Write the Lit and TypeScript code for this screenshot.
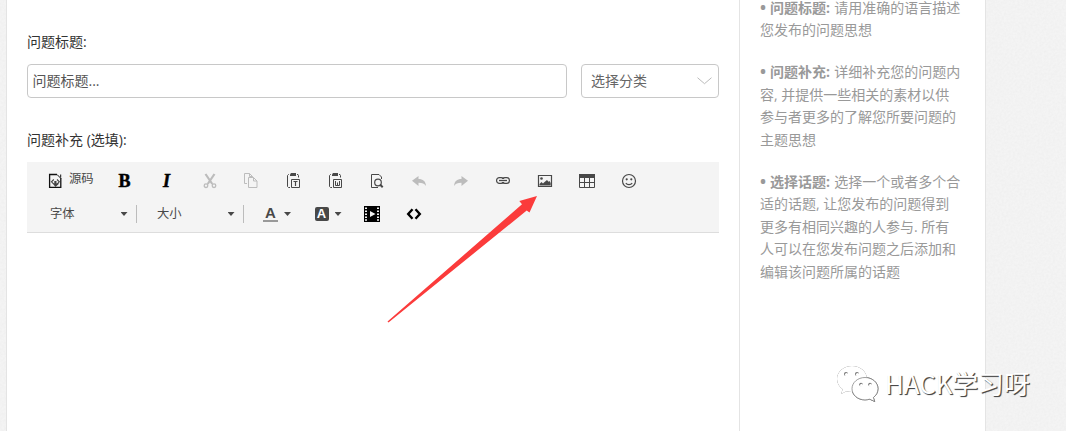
import { LitElement, html, css, svg } from "lit";
import { customElement, property } from "lit/decorators.js";

const glyphs: Record<string, unknown> = {
  source: svg`<path d="M9 1.500H1.600v12.800h11.200V5" fill="none" stroke="#111" stroke-width="1.300"/><path d="M9 1.500l3.800 3.800M12.700 1.500v3" fill="none" stroke="#111"/><path d="M5.800 6.500L3.500 8.800l2.300 2.300M9 6.500l2.300 2.300L9 11.100" fill="none" stroke="#444" stroke-width="1.100"/><path d="M6.300 8h2.200v2.500h2.800L7.400 14 4.800 10.500h1.500z" fill="#444"/>`,
  cut: svg`<g fill="none" stroke="#bcbcbc"><path d="M4.500 1l6.800 10M13.500 1L6.700 11" stroke-width="2.200"/><circle cx="5" cy="12.700" r="1.800" stroke-width="1.300"/><circle cx="13" cy="12.700" r="1.800" stroke-width="1.300"/></g>`,
  copy: svg`<g fill="none" stroke="#bcbcbc"><path d="M4 10.500H1.500v-10h5l3 3v1M6.500 .5v3h3"/><path d="M5.500 4.500h5l3.500 3.500v6.500H5.500z"/><path d="M10.500 4.500V8H14"/></g>`,
  pasteText: svg`<path d="M6 0h5v3H5V1.500z" fill="#484848"/><g fill="none" stroke="#484848"><path d="M4 1.500h-.5l-1 1v11l1 1H5M12 1.500h1l.5 1v2"/><path d="M6.500 6.500h8v8h-8z"/><path d="M8.500 8.500h4M10.500 8.500v4.500" stroke-width="1.200"/></g>`,
  pasteWord: svg`<path d="M6 0h5v3H5V1.500z" fill="#484848"/><g fill="none" stroke="#484848"><path d="M4 1.500h-.5l-1 1v11l1 1H5M12 1.500h1l.5 1v2"/><path d="M6.500 6.500h8v8h-8z"/><path d="M8.500 8v4.500h4V8M10.500 9.500v3"/></g>`,
  preview: svg`<g fill="none" stroke="#484848"><path d="M9 14.500H2.500v-13H10l2.500 2.500v2"/><circle cx="9" cy="9.500" r="3.300" stroke-width="1.200"/><path d="M11 11.500l2.700 2.700" stroke-width="2"/></g>`,
  undo: svg`<path d="M1 7.800L7.500 3v3c4.500 0 7 2 7.500 7C13.500 10.500 11.500 9.800 7.500 9.800V13z" fill="#bcbcbc"/>`,
  redo: svg`<path d="M15 7.800L8.500 3v3C4 6 1.500 8 1 13c1.500-2.500 3.500-3.200 7.500-3.200V13z" fill="#bcbcbc"/>`,
  link: svg`<g fill="none" stroke="#484848" stroke-width="1.200"><rect x="1.600" y="4.600" width="7.300" height="5.800" rx="2.700"/><rect x="7.100" y="4.600" width="7.300" height="5.800" rx="2.700"/></g><path d="M4 7.500h8" stroke="#f4f4f4" stroke-width="3"/><path d="M4 7.500h8" stroke="#484848" stroke-width="1.300"/>`,
  image: svg`<path d="M1.500 2.500h13v11h-13z" fill="none" stroke="#484848" stroke-width="1.200"/><path d="M2.500 12.500v-1.500l2-2 1.500 1.500 1-1L10 7l1.500 1.700L12.500 8 13.700 10v2.500z" fill="#484848"/><circle cx="4.500" cy="5.500" r="1.300" fill="#484848"/>`,
  table: svg`<path d="M0 1h16v4H0z" fill="#484848"/><path d="M.5 4.500v10h15v-10M.5 9.500h15M5.500 5v10M10.500 5v10" fill="none" stroke="#484848"/>`,
  smiley: svg`<circle cx="8" cy="8" r="6.500" fill="none" stroke="#484848" stroke-width="1.200"/><circle cx="5.700" cy="6.300" r="1.100" fill="#484848"/><circle cx="10.300" cy="6.300" r="1.100" fill="#484848"/><path d="M4.800 10.200c1.500 2 4.900 2 6.400 0" fill="none" stroke="#484848" stroke-width="1.200"/>`,
  video: svg`<path d="M0 0h16v16H0z"/><g fill="#f4f4f4"><path d="M1 1.500h2V3H1zM1 4.500h2V6H1zM1 7.500h2V9H1zM1 10.500h2V12H1zM1 13.300h2v1.500H1zM13 1.500h2V3h-2zM13 4.500h2V6h-2zM13 7.500h2V9h-2zM13 10.500h2V12h-2zM13 13.300h2v1.500h-2zM6 5l5.500 3L6 11z"/></g>`,
  code: svg`<path d="M6.500 3.300L2.200 8l4.300 4.700M9.500 3.300L13.800 8l-4.300 4.700" fill="none" stroke="#000" stroke-width="2.400"/>`,
};

@customElement("tool-icon")
class ToolIcon extends LitElement {
  @property() name = "";
  static styles = css`
    :host { display: flex; width: 16px; height: 16px; flex: none; }
    svg { display: block; width: 16px; height: 16px; }
  `;
  render() {
    return html`<svg viewBox="0 0 16 16">${glyphs[this.name]}</svg>`;
  }
}

const clipboardTools = [
  "cut", "copy", "pasteText", "pasteWord", "preview",
  "undo", "redo", "link", "image", "table", "smiley",
];

@customElement("app-root")
class AppRoot extends LitElement {
  static styles = css`
    :host {
      display: block;
      position: relative;
      height: 431px;
      overflow: hidden;
      font: 14px/22.4px "Open Sans", "Noto Sans CJK SC", sans-serif;
      color: #333;
      background: #f4f4f4;
    }
    * { box-sizing: border-box; }
    .grain { position: absolute; inset: 0; width: 100%; height: 100%; }
    .page {
      position: relative;
      display: flex;
      width: 980px;
      height: 431px;
      margin-left: 6px;
      background: #fff;
      border: solid #e4e4e4;
      border-width: 0 1px;
    }
    .main { width: 732px; padding: 31px 20px 0; }
    .label { height: 22px; line-height: 22px; color: #333; }
    .fields { display: flex; gap: 14px; margin: 11px 0 31px; }
    .box {
      display: flex;
      align-items: center;
      height: 34px;
      border: 1px solid #c8c8c8;
      border-radius: 4px;
      color: #555;
    }
    .title { width: 540px; padding-left: 4.500px; }
    .select { width: 138px; padding: 0 6px 0 9px; justify-content: space-between; color: #666; }
    .chev { width: 15px; height: 8px; }
    .toolbar {
      height: 71px;
      margin-top: 11px;
      background: #f4f4f4;
      border-bottom: 1px solid #ddd;
      font-size: 12px;
      color: #484848;
    }
    .row { display: flex; align-items: center; }
    .first { height: 38px; }
    .second { height: 28px; padding-left: 23px; }
    .src { display: flex; width: 77px; padding-left: 21px; gap: 5px; align-items: center; }
    .src span { line-height: 18px; padding-bottom: 4px; font-size: 12.300px; }
    .cell { display: flex; width: 42px; justify-content: center; }
    .serif { font: bold 18px/20px "Liberation Serif", serif; color: #000; -webkit-text-stroke: .5px #000; padding-right: 1px; }
    .italic { font-style: italic; }
    .combo { display: flex; align-items: center; justify-content: space-between; width: 77px; font-size: 12.300px; }
    .caret { width: 7px; height: 4px; margin-right: -.5px; background: #484848; clip-path: polygon(0 0, 100% 0, 50% 100%); }
    .sep { width: 1px; height: 18px; margin: 0 20px 0 9px; background: #bcbcbc; }
    .color { display: flex; align-items: center; }
    .color .caret { margin-left: 6px; }
    .fg, .fill { display: flex; justify-content: center; font-family: "Liberation Sans", sans-serif; font-weight: bold; }
    .fg { width: 15px; height: 15px; margin-left: -1px; border-bottom: 2px solid #999; font-size: 15px; line-height: 12px; }
    .fill { width: 14px; height: 14px; margin-left: 24px; border-radius: 2px; background: #484848; color: #fff; font-size: 13px; line-height: 14px; }
    .media { display: flex; gap: 26px; margin-left: 23px; }
    .aside { width: 246px; border-left: 1px solid #e4e4e4; padding-left: 20px; margin-top: -3.500px; color: #999; white-space: nowrap; }
    .aside p { margin: 0 0 20px; }
    .dot { display: inline-block; width: 10px; font-weight: bold; font-size: 16px; line-height: 1; }
    .aside b { margin-right: .7px; }
    .arrow { position: absolute; left: 380px; top: 190px; width: 165px; height: 140px; }
    .mark { position: absolute; left: 835px; top: 363px; display: flex; align-items: center; gap: 6px; }
    .bubbles { width: 44px; height: 38px; filter: drop-shadow(.6px .8px .5px #555); }
    .brand {
      font: 25.800px/40px "Noto Sans CJK SC", sans-serif;
      color: #fff;
      white-space: nowrap;
      text-shadow: 1px 1px 1px #444, 1px 1px 0 #777;
    }
  `;

  cell(name: string) {
    return html`<div class="cell"><tool-icon name=${name}></tool-icon></div>`;
  }

  render() {
    return html`
      <svg class="grain">
        <filter id="n"><feTurbulence type="fractalNoise" baseFrequency=".45" numOctaves="2" /><feColorMatrix values="0 0 0 0 .7  0 0 0 0 .7  0 0 0 0 .7  .3 0 0 0 -.08" /></filter>
        <rect width="100%" height="100%" filter="url(#n)" />
      </svg>
      <div class="page">
        <div class="main">
          <div class="label">问题标题:</div>
          <div class="fields">
            <div class="box title">问题标题...</div>
            <div class="box select">选择分类
              <svg class="chev" viewBox="0 0 15 8"><path d="M.5 .7l7 6 7-6" fill="none" stroke="#bbb" /></svg>
            </div>
          </div>
          <div class="label">问题补充 (选填):</div>
          <div class="toolbar">
            <div class="row first">
              <div class="src"><tool-icon name="source"></tool-icon><span>源码</span></div>
              <div class="cell serif">B</div>
              <div class="cell serif italic">I</div>
              ${clipboardTools.map((n) => this.cell(n))}
            </div>
            <div class="row second">
              <div class="combo">字体<i class="caret"></i></div>
              <i class="sep"></i>
              <div class="combo">大小<i class="caret"></i></div>
              <i class="sep"></i>
              <div class="color">
                <span class="fg">A</span><i class="caret"></i>
                <span class="fill">A</span><i class="caret"></i>
              </div>
              <div class="media"><tool-icon name="video"></tool-icon><tool-icon name="code"></tool-icon></div>
            </div>
          </div>
        </div>
        <div class="aside">
          <p><span class="dot">•</span><b>问题标题:</b> 请用准确的语言描述<br />您发布的问题思想</p>
          <p><span class="dot">•</span><b>问题补充:</b> 详细补充您的问题内<br />容, 并提供一些相关的素材以供<br />参与者更多的了解您所要问题的<br />主题思想</p>
          <p><span class="dot">•</span><b>选择话题:</b> 选择一个或者多个合<br />适的话题, 让您发布的问题得到<br />更多有相同兴趣的人参与. 所有<br />人可以在您发布问题之后添加和<br />编辑该问题所属的话题</p>
        </div>
      </div>
      <svg class="arrow" viewBox="380 190 165 140">
        <path d="M537 196L519.300 201 522 204.300 387.500 321.500 388.500 322.500 526.700 210.500 529.500 212.500z" fill="#fb3b3b" />
      </svg>
      <div class="mark">
        <svg class="bubbles" viewBox="835 363 44 38">
          <path d="M852 365c-8.500 0-15 5.800-15 13 0 4.200 2.200 7.800 5.700 10.200L841 393l5.500-2.800c1.800.5 3.600.8 5.500.8 8.500 0 15-5.800 15-13s-6.500-13-15-13z" fill="#fff" />
          <g fill="#777"><circle cx="846" cy="373" r="2" /><circle cx="857" cy="373" r="2" /></g>
          <g fill="#fff"><circle cx="846.600" cy="373.800" r="1.700" /><circle cx="857.600" cy="373.800" r="1.700" /></g>
          <path d="M865 376.500c-7.200 0-13 5-13 11.200s5.800 11.200 13 11.200c1.600 0 3.200-.3 4.700-.7l5 2.300-1.300-4c2.800-2.100 4.600-5.200 4.600-8.800 0-6.200-5.800-11.200-13-11.200z" fill="#fff" stroke="#777" stroke-width=".7" />
          <g fill="#777"><circle cx="861" cy="383.500" r="1.800" /><circle cx="870" cy="383.500" r="1.800" /></g>
          <g fill="#fff"><circle cx="861.500" cy="384.200" r="1.500" /><circle cx="870.500" cy="384.200" r="1.500" /></g>
        </svg>
        <span class="brand">HACK学习呀</span>
      </div>
    `;
  }
}
